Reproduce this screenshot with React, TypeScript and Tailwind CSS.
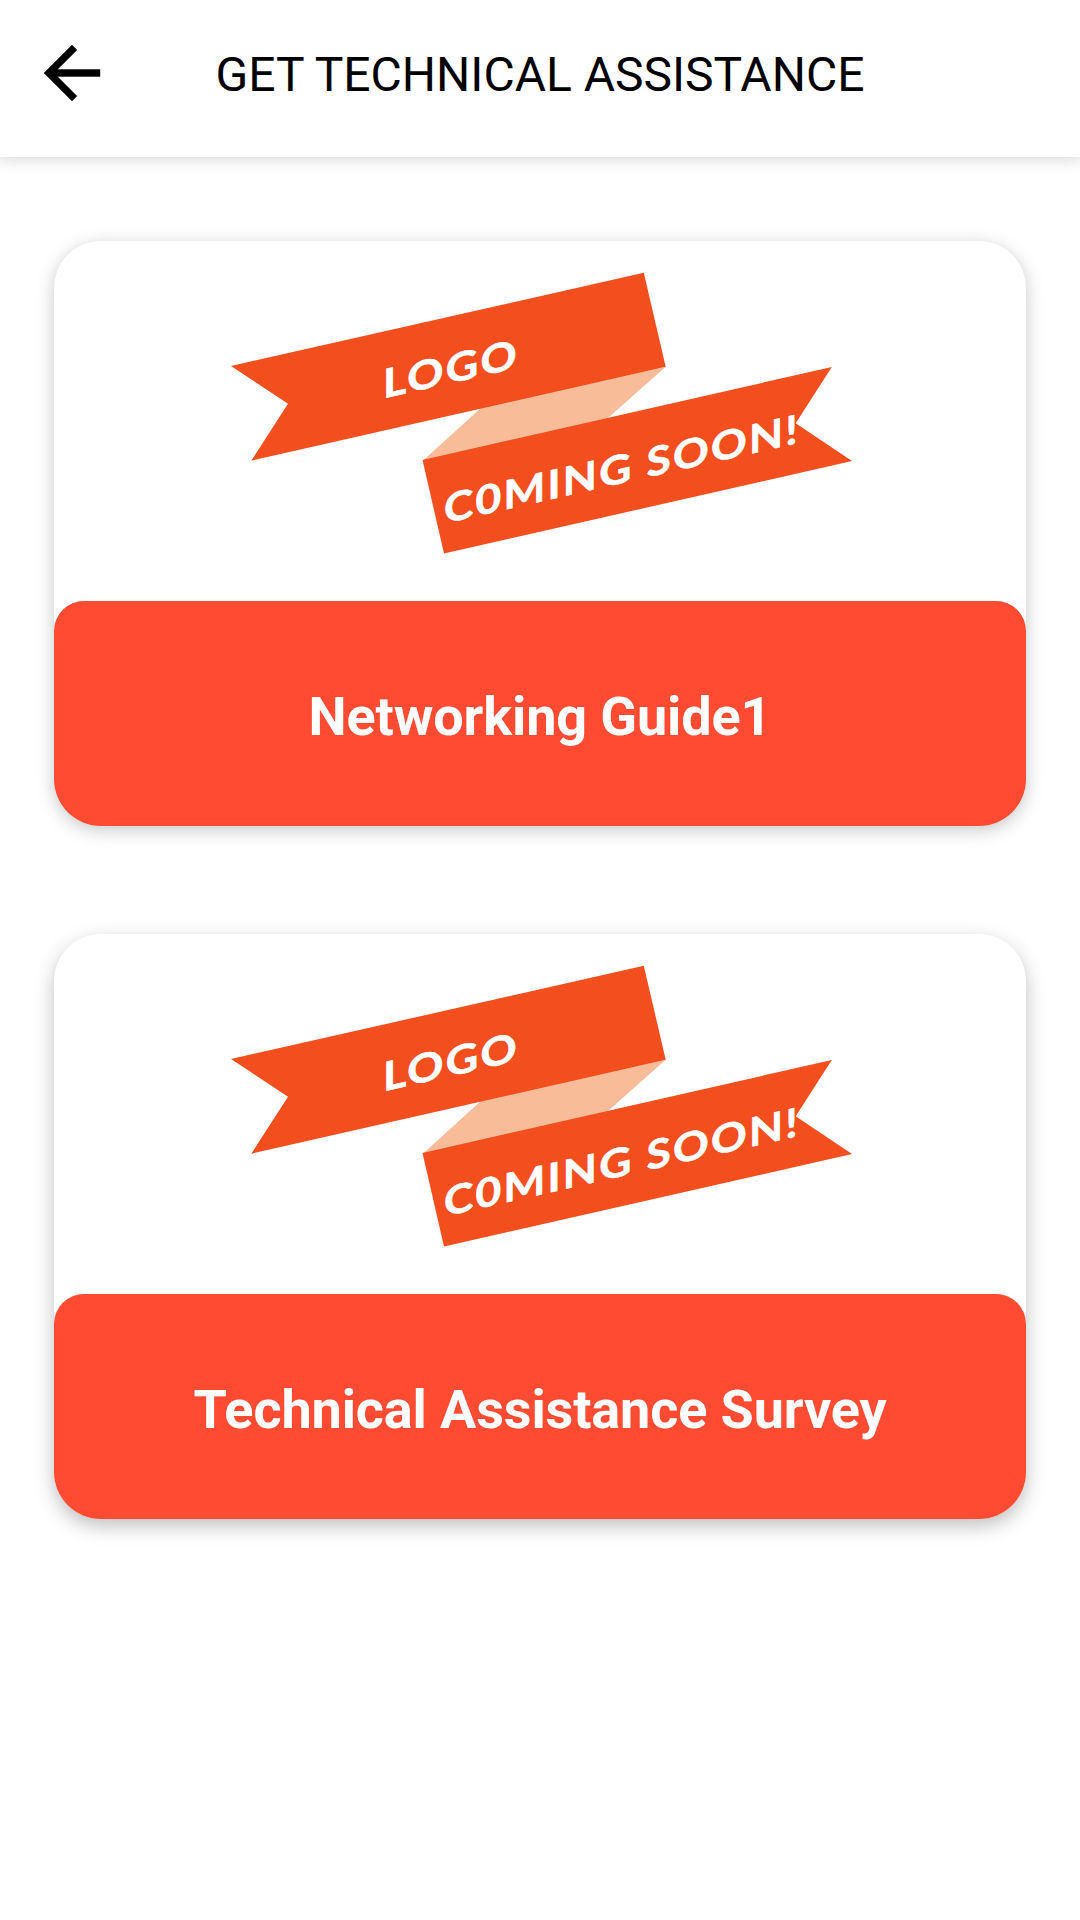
function BackArrow() {
  return (
    <svg viewBox="0 0 24 24" className="h-[84px] w-[84px]" fill="#000" stroke="#000" strokeWidth="0.12" aria-hidden="true">
      <path d="M20 11H7.83l5.59-5.59L12 4l-8 8 8 8 1.41-1.41L7.83 13H20v-2z" />
    </svg>
  );
}

function ComingSoonLogo() {
  return (
    <svg viewBox="54 241 972 360" className="block h-[360px] w-full" role="img" aria-label="Logo coming soon">
      <polygon points="665.7,366.7 608,418 422.5,461 482,407" fill="#f9bc99" />
      <polygon points="231,366 643.8,272.8 665.7,366.7 251.3,460.7 288,403.7" fill="#f24e1e" />
      <polygon points="422.5,460 831.8,367 795.7,423.3 852,461 444,553.5" fill="#f24e1e" />
      <g
        fill="#fff"
        stroke="#fff"
        strokeWidth="0.6"
        fontFamily="Lato, sans-serif"
        fontWeight="700"
        fontSize="40"
        letterSpacing="2"
      >
        <text transform="translate(383 398.5) skewY(-12.8)" textLength="136" lengthAdjust="spacingAndGlyphs">
          LOGO
        </text>
        <text transform="translate(444 523.5) skewY(-12.8)" textLength="356" lengthAdjust="spacingAndGlyphs">
          C0MING SOON!
        </text>
      </g>
    </svg>
  );
}

function GuideCard({ title, shadow }: { title: string; shadow: string }) {
  return (
    <button className={`block w-full overflow-hidden rounded-[47px] bg-white ${shadow}`}>
      <ComingSoonLogo />
      <div className="flex h-[225px] items-center justify-center rounded-t-[30px] bg-[#ff4b32] pt-[7px] text-[54px] leading-none font-bold tracking-[-0.13px] text-white">
        <span className="whitespace-nowrap">{title}</span>
      </div>
    </button>
  );
}

export default function App() {
  return (
    <div className="min-h-[1920px] w-full overflow-x-hidden bg-white font-[Roboto,sans-serif]">
      <header className="grid h-[157px] grid-cols-[114px_1fr_114px] bg-white shadow-[0_0_14px_3px_rgba(0,0,0,0.15)]">
        <button className="mt-[31px] ml-[30px] h-[84px] w-[84px]" aria-label="Back">
          <BackArrow />
        </button>
        <h1 className="mt-[47px] text-center text-[48px] leading-[56px] font-normal whitespace-nowrap text-black">
          GET TECHNICAL ASSISTANCE
        </h1>
      </header>
      <main className="flex flex-col gap-[108px] px-[54px] pt-[84px]">
        <GuideCard title="Networking Guide1" shadow="shadow-[0_4px_18px_rgba(0,0,0,0.22)]" />
        <GuideCard title="Technical Assistance Survey" shadow="shadow-[0_7px_19px_rgba(0,0,0,0.25)]" />
      </main>
    </div>
  );
}
